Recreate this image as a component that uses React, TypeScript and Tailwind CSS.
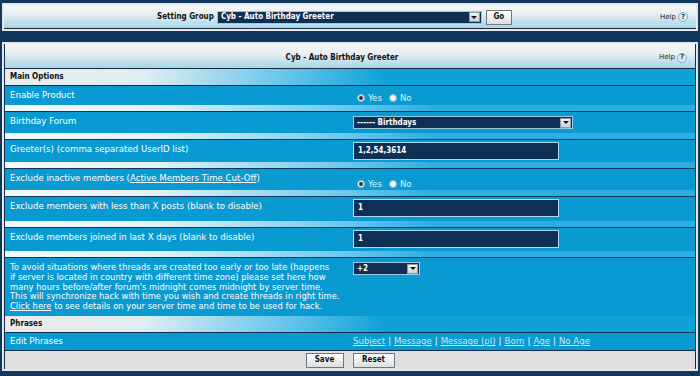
import React from 'react';

const BOLD = "font-['DejaVu_Sans_Condensed','DejaVu_Sans',sans-serif] font-bold";

function Arrow() {
  return (
    <span className="ml-auto mr-[1px] flex h-[10px] w-[11px] items-center justify-center border border-[#8c99a6] bg-[linear-gradient(to_bottom,#f4f6f8,#c9d0d6)]">
      <span className="h-0 w-0 border-x-[3px] border-t-[3px] border-x-transparent border-t-[#111]" />
    </span>
  );
}

function Select({ text, w }: { text: string; w: string }) {
  return (
    <div className={`flex h-[13px] items-center border border-[#9cc9de] bg-[#0f3054] pl-[3px] ${w}`}>
      <span className={`${BOLD} text-[8px] text-white`}>{text}</span>
      <Arrow />
    </div>
  );
}

function Input({ value }: { value: string }) {
  return (
    <div className="flex h-[18px] w-[206px] items-center border border-[#a9dcf0] bg-[#0f3054] pl-[4px]">
      <span className={`${BOLD} text-[8px] text-white`}>{value}</span>
    </div>
  );
}

function Radio({ on }: { on?: boolean }) {
  return (
    <span className="flex h-[8px] w-[8px] items-center justify-center rounded-full border border-[#8fb3c6] bg-[#eef4f7]">
      {on && <span className="h-[4px] w-[4px] rounded-full bg-[#2a3440]" />}
    </span>
  );
}

function YesNo() {
  return (
    <div className="flex items-center text-[8.6px] text-[#dff2fb]">
      <span className="ml-[4px]"><Radio on /></span>
      <span className="ml-[3px]">Yes</span>
      <span className="ml-[7px]"><Radio /></span>
      <span className="ml-[3px]">No</span>
    </div>
  );
}

function Help() {
  return (
    <div className="flex items-center gap-[2px] text-[7px] text-[#222]">
      <span>Help</span>
      <span className={`flex h-[10px] w-[10px] items-center justify-center rounded-full border border-[#8aaebe] bg-[#d6ecf4] ${BOLD} text-[7px] text-[#1b3550]`}>?</span>
    </div>
  );
}

function Row({ label, h, children }: { label: React.ReactNode; h: string; children?: React.ReactNode }) {
  return (
    <div>
      <div className={`flex bg-[#0a9ad2] ${h}`}>
        <div className="w-[348px] pl-[5px] pt-[3px] text-[8.6px] leading-[12px] text-white">{label}</div>
        <div className="flex-1 pt-[2px]">{children}</div>
      </div>
      <div className="h-[6px] bg-[linear-gradient(to_right,#f6f9fa_0%,#e3f2f8_22%,#72cbee_48%,#2caee2_62%,#2caee2_100%)]" />
      <div className="h-[1px] bg-[#0e3a5b]" />
    </div>
  );
}

function SectionHead({ title }: { title: string }) {
  return (
    <div className="flex h-[17px] items-center border-b border-[#0e2d48] bg-[linear-gradient(to_right,#ebebeb_0%,#dfeef3_20%,#5ec3ea_42%,#0fa2d8_55%,#0fa2d8_100%)] pl-[5px]">
      <span className={`${BOLD} text-[8px] text-[#111]`}>{title}</span>
    </div>
  );
}

function Button({ children, w }: { children: React.ReactNode; w: string }) {
  return (
    <div className={`flex h-[15px] items-center justify-center border border-[#6f7780] bg-[linear-gradient(to_bottom,#ffffff,#dcdfe2)] ${BOLD} text-[8px] text-[#111] ${w}`}>
      {children}
    </div>
  );
}

const Link = ({ children }: { children: React.ReactNode }) => (
  <span className="text-[#cde6f4] underline">{children}</span>
);

export default function App() {
  return (
    <div className="h-[376px] w-[700px] overflow-hidden bg-[#12375c] px-[2px] pt-[3px] font-['DejaVu_Sans',sans-serif]">
      {/* setting group bar */}
      <div className="border-2 border-[#e3e9ee]">
        <div className="flex h-[24px] items-center border-b border-[#1a2a3a] bg-[linear-gradient(to_bottom,#f6f8f9_0%,#e8eef1_40%,#a3d6e7_100%)] pr-[8px] pt-[1px]">
          <span className={`${BOLD} ml-[153px] text-[8px] text-[#111]`}>Setting Group</span>
          <div className="ml-[3px]">
            <Select text="Cyb - Auto Birthday Greeter" w="w-[265px]" />
          </div>
          <div className="ml-[4px]">
            <Button w="w-[26px]">Go</Button>
          </div>
          <div className="ml-auto">
            <Help />
          </div>
        </div>
      </div>

      {/* main panel */}
      <div className="mt-[11px] border-2 border-[#e3e9ee]">
        <div className="border-x border-[#0e2d48]">
          <div className="flex h-[25px] items-center border-b border-[#1a2a3a] bg-[linear-gradient(to_bottom,#f6f8f9_0%,#e8eef1_40%,#a3d6e7_100%)] pr-[8px] pt-[3px]">
            <span className={`${BOLD} flex-1 pl-[20px] text-center text-[8px] text-[#111]`}>Cyb - Auto Birthday Greeter</span>
            <Help />
          </div>

          <SectionHead title="Main Options" />

          <Row label="Enable Product" h="h-[19px]">
            <div className="pt-[4px]"><YesNo /></div>
          </Row>
          <Row label="Birthday Forum" h="h-[21px]">
            <div className="pt-[2px]"><Select text="------ Birthdays" w="w-[220px]" /></div>
          </Row>
          <Row label="Greeter(s) (comma separated UserID list)" h="h-[22px]">
            <Input value="1,2,54,3614" />
          </Row>
          <Row
            label={
              <span>
                Exclude inactive members (<span className="underline">Active Members Time Cut-Off</span>)
              </span>
            }
            h="h-[21px]"
          >
            <div className="pt-[7px]"><YesNo /></div>
          </Row>
          <Row label="Exclude members with less than X posts (blank to disable)" h="h-[24px]">
            <Input value="1" />
          </Row>
          <Row label="Exclude members joined in last X days (blank to disable)" h="h-[23px]">
            <Input value="1" />
          </Row>

          <div className="flex h-[58px] bg-[#0a9ad2]">
            <div className="w-[348px] whitespace-nowrap pl-[5px] pt-[5px] text-[8.4px] leading-[9.75px] text-white">
              To avoid situations where threads are created too early or too late (happens
              <br />
              if server is located in country with different time zone) please set here how
              <br />
              many hours before/after forum's midnight comes midnight by server time.
              <br />
              This will synchronize hack with time you wish and create threads in right time.
              <br />
              <span className="underline">Click here</span> to see details on your server time and time to be used for hack.
            </div>
            <div className="flex-1 pt-[4px]">
              <Select text="+2" w="w-[67px]" />
            </div>
          </div>

          <SectionHead title="Phrases" />

          <div className="flex h-[17px] items-center bg-[#0a9ad2] text-[8.6px]">
            <div className="w-[348px] pl-[5px] text-white">Edit Phrases</div>
            <div className="flex gap-[3px] text-white">
              <Link>Subject</Link>|<Link>Message</Link>|<Link>Message (pl)</Link>|<Link>Born</Link>|<Link>Age</Link>|<Link>No Age</Link>
            </div>
          </div>

          <div className="flex h-[19px] items-center justify-center gap-[9px] border-t border-[#0e2d48] bg-[#dedede]">
            <Button w="w-[38px]">Save</Button>
            <Button w="w-[42px]">Reset</Button>
          </div>
        </div>
      </div>
    </div>
  );
}
